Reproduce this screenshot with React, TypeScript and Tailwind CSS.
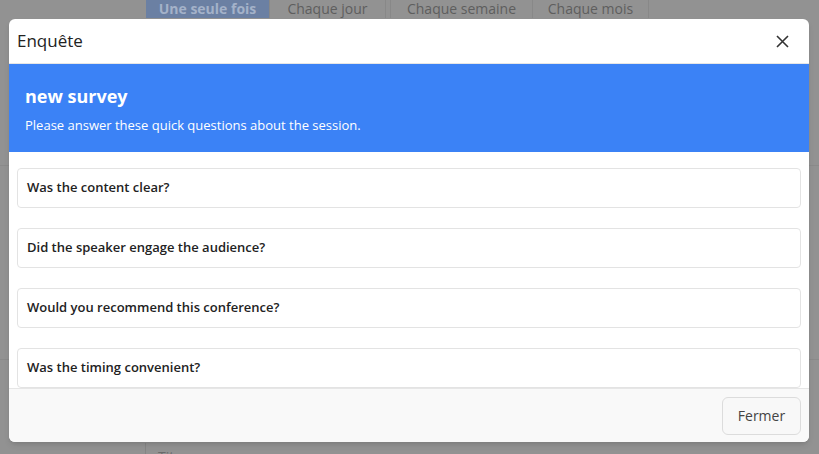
import React from "react";

const questions = [
  "Was the content clear?",
  "Did the speaker engage the audience?",
  "Would you recommend this conference?",
  "Was the timing convenient?",
];

export default function App() {
  return (
    <div className="relative h-[454px] w-[819px] overflow-hidden bg-[#929292] font-['Open_Sans',sans-serif]">
      {/* page behind the overlay */}
      <div className="flex h-full flex-col">
        <div className="flex h-[18px] pl-[146px] text-[14px] leading-[18px] text-[#5e5e5e]">
          <div className="flex w-[123px] justify-center bg-[#6b80a3] font-bold text-[#a4b2c9]">Une seule fois</div>
          <div className="flex w-[117px] justify-center border-x border-[#888]">Chaque jour</div>
          <div className="ml-[4px] flex w-[143px] justify-center border-x border-[#888]">Chaque semaine</div>
          <div className="flex w-[116px] justify-center border-r border-[#888]">Chaque mois</div>
        </div>
        <div className="mt-[147px] border-t border-[#8a8a8a]" />
        <div className="mt-[193px] border-t border-[#8a8a8a]" />
        <div className="ml-[145px] mt-[83px] flex-1 border-l border-[#858585] pl-[12px] pt-[3px] text-[14px] text-[#6a6a6a]">
          Titre
        </div>
      </div>

      {/* modal */}
      <div className="absolute left-[9px] top-[19px] flex h-[423px] w-[800px] flex-col overflow-hidden rounded-md bg-white shadow-md">
        <div className="flex h-[45px] shrink-0 items-center justify-between border-b border-[#e6e6e6] pl-[8px] pr-[20px]">
          <span className="text-[17px] text-[#222]">Enquête</span>
          <svg width="13" height="13" viewBox="0 0 13 13" className="text-[#333]">
            <path d="M1 1L12 12M12 1L1 12" stroke="currentColor" strokeWidth="1.6" />
          </svg>
        </div>

        <div className="flex-1 overflow-hidden">
          <div className="flex h-[88px] flex-col justify-center bg-[#3b82f6] px-4 pt-[2px] text-white">
            <div className="text-[18px] font-bold leading-tight">new survey</div>
            <div className="mt-[10px] text-[13px] leading-tight">Please answer these quick questions about the session.</div>
          </div>
          <div className="flex flex-col gap-5 px-2 pt-4">
            {questions.map((q) => (
              <div
                key={q}
                className="flex h-[40px] items-center rounded border border-[#e3e3e3] px-[9px] text-[13px] font-semibold text-[#222]"
              >
                {q}
              </div>
            ))}
          </div>
        </div>

        <div className="flex h-[54px] shrink-0 items-center justify-end border-t border-[#e6e6e6] bg-[#f9f9f9] px-2">
          <button className="h-[38px] w-[79px] rounded-md border border-[#dcdcdc] bg-[#f8f8f8] text-[14px] text-[#444]">
            Fermer
          </button>
        </div>
      </div>
    </div>
  );
}
